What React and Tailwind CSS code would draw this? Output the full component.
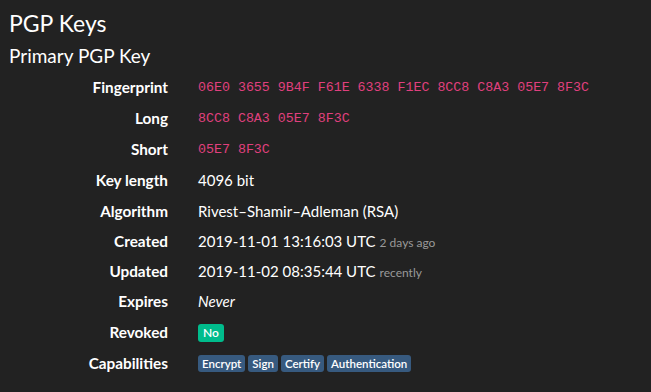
const rows = [
  { label: 'Fingerprint', code: '06E0 3655 9B4F F61E 6338 F1EC 8CC8 C8A3 05E7 8F3C', h: 'h-[31px]' },
  { label: 'Long', code: '8CC8 C8A3 05E7 8F3C', h: 'h-[31px]' },
  { label: 'Short', code: '05E7 8F3C', h: 'h-[31px]' },
  { label: 'Key length', text: '4096 bit', h: 'h-[31px]' },
  { label: 'Algorithm', text: 'Rivest–Shamir–Adleman (RSA)', h: 'h-[30px]' },
  { label: 'Created', text: '2019-11-01 13:16:03 UTC', note: '2 days ago', h: 'h-[30px]' },
  { label: 'Updated', text: '2019-11-02 08:35:44 UTC', note: 'recently', h: 'h-[30px]' },
  { label: 'Expires', italic: 'Never', h: 'h-[31px]' },
];

const capabilities = ['Encrypt', 'Sign', 'Certify', 'Authentication'];

export default function App() {
  return (
    <div className="h-[392px] w-[651px] overflow-hidden bg-[#222222] pl-[9px] pt-[7px] font-['Lato','Open_Sans',sans-serif] text-white">
      <h1 className="text-[23px] leading-[32px]">PGP Keys</h1>
      <h2 className="mt-[2px] text-[19px] leading-[30px]">Primary PGP Key</h2>

      <div className="-ml-[9px] mt-[1px]">
        {rows.map((row) => (
          <Row key={row.label} label={row.label} height={row.h}>
            {row.code && (
              <code className="font-['Liberation_Mono',monospace] text-[13.3px] text-[#e0407e]">{row.code}</code>
            )}
            {row.text && <span className="text-[15px]">{row.text}</span>}
            {row.note && <span className="ml-[4px] text-[12px] text-[#999999]">{row.note}</span>}
            {row.italic && <em className="text-[15px]">{row.italic}</em>}
          </Row>
        ))}

        <Row label="Revoked" height="h-[31px]">
          <span className="flex h-[18px] items-center rounded-[3px] bg-[#00bc8c] px-[5px] text-[12px] font-semibold">No</span>
        </Row>

        <Row label="Capabilities" height="h-[31px]">
          <div className="flex gap-[3px]">
            {capabilities.map((cap) => (
              <span key={cap} className="flex h-[17px] items-center rounded-[3px] bg-[#375a7f] px-[4px] text-[11.5px] font-semibold">
                {cap}
              </span>
            ))}
          </div>
        </Row>
      </div>
    </div>
  );
}

function Row({ label, height, children }) {
  return (
    <div className={`flex items-center ${height}`}>
      <div className="w-[168px] text-right text-[15.3px] font-bold">{label}</div>
      <div className="ml-[30px] flex items-baseline">{children}</div>
    </div>
  );
}
